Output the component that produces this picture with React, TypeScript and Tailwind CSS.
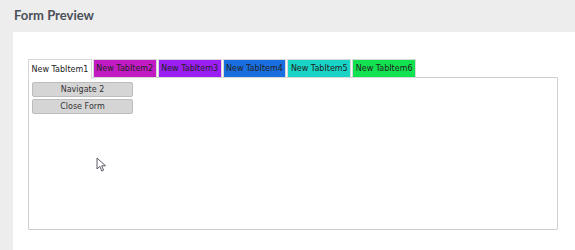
import React from 'react'

const tabs = [
  { label: 'New TabItem1', bg: 'bg-white', active: true },
  { label: 'New TabItem2', bg: 'bg-[#c21bc4]' },
  { label: 'New TabItem3', bg: 'bg-[#9b1ff2]' },
  { label: 'New TabItem4', bg: 'bg-[#196fe0]' },
  { label: 'New TabItem5', bg: 'bg-[#19d4c6]' },
  { label: 'New TabItem6', bg: 'bg-[#12e24f]' },
]

export default function App() {
  return (
    <div className="w-[575px] h-[250px] bg-[#ededed] overflow-hidden flex flex-col font-['DejaVu_Sans',sans-serif]">
      <div className="h-[32px] pl-[14px] pt-[6px] text-[13px] font-bold text-[#4b505a] font-['Lato',sans-serif]">
        Form Preview
      </div>
      <div className="relative flex-1 ml-[13px] bg-white pt-[27px] pl-[15px] pr-[17px]">
        {/* tab strip */}
        <div className="flex gap-[1px] h-[19px]">
          {tabs.map((t) => (
            <div
              key={t.label}
              className={`${t.bg} h-[19px] px-[2.5px] flex items-center text-[8px] text-[#222] border border-[#d8d8d8] ${t.active ? 'border-b-0 h-[20px] relative z-10' : ''}`}
            >
              {t.label}
            </div>
          ))}
        </div>
        {/* tab content */}
        <div className="h-[153px] border border-[#cfcfcf] rounded-br-[2px] px-[3px] pt-[4px] flex flex-col gap-[2px] -mt-[1px]">
          {['Navigate 2', 'Close Form'].map((b) => (
            <div
              key={b}
              className="w-[101px] h-[15px] bg-[#d5d5d5] border border-[#bdbdbd] rounded-[2px] flex items-center justify-center text-[8px] text-[#333]"
            >
              {b}
            </div>
          ))}
        </div>
        {/* mouse cursor */}
        <svg className="absolute left-[83px] top-[125px]" width="12" height="16" viewBox="0 0 12 16">
          <path d="M1 1 L1 12 L3.8 9.4 L5.8 14 L7.6 13.2 L5.7 8.8 L9.5 8.8 Z" fill="white" stroke="#5a5a6a" strokeWidth="1" strokeLinejoin="round" />
        </svg>
      </div>
    </div>
  )
}
